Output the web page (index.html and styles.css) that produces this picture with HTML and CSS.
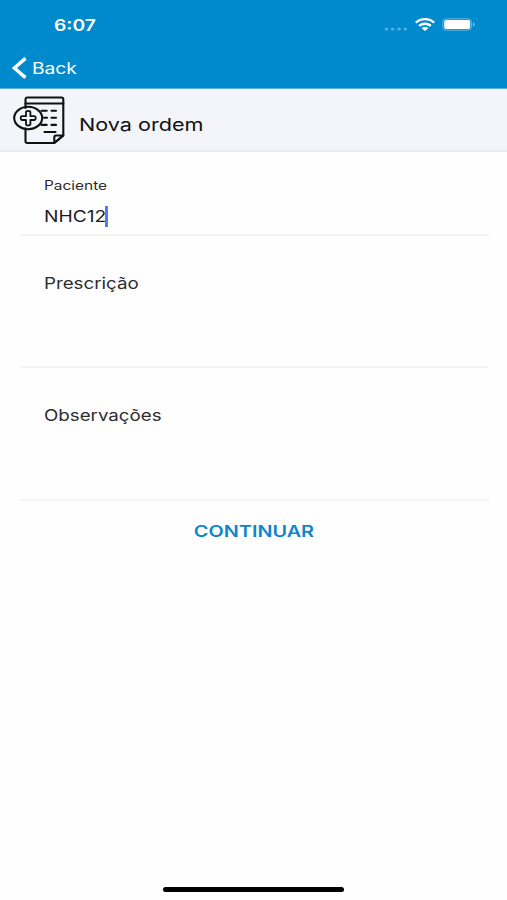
FILE: index.html
```
<!DOCTYPE html>
<html lang="pt">
<head>
  <meta charset="UTF-8">
  <meta name="viewport" content="width=device-width, initial-scale=1.0">
  <title>Nova ordem</title>
  <link rel="stylesheet" href="styles.css">
</head>
<body>
  <header class="header">
    <div class="status-bar">
      <span class="wide time">6:07</span>
      <div class="status-icons">
        <svg class="signal" width="24" height="4" viewBox="0 0 24 4" fill="#fff">
          <ellipse cx="2.4" cy="2" rx="1.9" ry="1.5"/>
          <ellipse cx="8.7" cy="2" rx="1.9" ry="1.5"/>
          <ellipse cx="15" cy="2" rx="1.9" ry="1.5"/>
          <ellipse cx="21.3" cy="2" rx="1.9" ry="1.5"/>
        </svg>
        <svg class="wifi" width="20" height="13" viewBox="0 0 20 13" fill="none" stroke="#fff" stroke-width="2.4">
          <path d="M.8 4.6C6 0 14 0 19.2 4.6"/>
          <path d="M4.1 7.9c3.4-2.9 8.4-2.9 11.8 0"/>
          <path d="M10 12.9L6.5 10.1c2-1.6 5-1.6 7 0z" fill="#fff" stroke="none"/>
        </svg>
        <svg class="battery" width="34" height="13" viewBox="0 0 34 13">
          <rect x=".8" y=".8" width="28.6" height="11.4" rx="3.4" fill="none" stroke="#fff" stroke-opacity=".4"/>
          <rect x="2.2" y="2.1" width="26" height="9" rx="2" fill="#fff"/>
          <path d="M31 4.5c2.2.7 2.2 3.3 0 4z" fill="#fff" fill-opacity=".45"/>
        </svg>
      </div>
    </div>
    <a class="back" href="#">
      <svg width="15" height="22" viewBox="0 0 15 22" fill="none" stroke="#fff" stroke-width="3.4">
        <path d="M13.5 1.4L2.4 11l11.1 9.6"/>
      </svg>
      <span class="wide back-text">Back</span>
    </a>
  </header>

  <div class="title-bar">
    <svg class="order-icon" width="53" height="49" viewBox="0 0 53 49" fill="none" stroke="#111" stroke-width="2.1" stroke-linecap="round" stroke-linejoin="round">
      <path d="M12.5 12V3.2c0-1 .8-1.7 1.8-1.7h34.2c1 0 1.8.7 1.8 1.7V39.5l-9 7.5h-27c-1 0-1.8-.7-1.8-1.7V32.5"/>
      <path d="M12.5 7.5h37.8"/>
      <path d="M41.3 47v-5.8c0-1 .7-1.7 1.7-1.7h7.3z"/>
      <path d="M28.5 14.7h5.2M38.5 14.7h4.5M31 21.8h3M38.5 21.8h4.5M28.5 28.9h5.2M38.5 28.9h4.5M31.5 36h11"/>
      <ellipse cx="15.2" cy="22" rx="14" ry="11.2"/>
      <path d="M13 16.2c0-1.9 4.4-1.9 4.4 0v4h3.8c2 0 2 3.8 0 3.8h-3.8v4c0 1.9-4.4 1.9-4.4 0v-4H9.2c-2 0-2-3.8 0-3.8H13z" stroke-width="1.8"/>
    </svg>
    <h1 class="wide title">Nova ordem</h1>
  </div>

  <main class="form">
    <div class="field patient">
      <label class="wide label">Paciente</label>
      <div class="value"><span class="wide text">NHC12</span><i class="caret"></i></div>
    </div>
    <div class="field area">
      <span class="wide text area-label">Prescrição</span>
    </div>
    <div class="field area notes-field">
      <span class="wide text area-label">Observações</span>
    </div>
    <button class="continue"><span class="wide continue-text">CONTINUAR</span></button>
  </main>

  <div class="home-indicator"></div>
</body>
</html>
```
FILE: styles.css
```
* {
  box-sizing: border-box;
}
body {
  margin: 0;
  height: 900px;
  display: flex;
  flex-direction: column;
  overflow: hidden;
  background: #fefefe;
  color: #1c1c1e;
  font-family: Inter, "Liberation Sans", sans-serif;
}
/* extended letterforms */
.wide {
  display: block;
  width: max-content;
  white-space: nowrap;
  transform: scaleX(1.2);
  transform-origin: left center;
}
.header {
  height: 89px;
  background: #008ace;
  border-bottom: 1px solid #5fb2de;
  color: #fff;
}
.status-bar {
  height: 48px;
  padding: 0 31px 0 54px;
  display: flex;
  align-items: center;
  justify-content: space-between;
}
.time {
  padding-top: 1px;
  font-size: 16px;
  font-weight: 600;
}
.status-icons {
  display: flex;
  align-items: center;
}
.signal {
  margin: 9px 7px 0 0;
  opacity: .32;
}
.wifi {
  margin-right: 7px;
}
.back {
  height: 39px;
  padding-left: 12px;
  display: flex;
  align-items: center;
  gap: 5px;
  color: #fff;
  text-decoration: none;
}
.back-text {
  font-size: 16px;
}
.title-bar {
  height: 63px;
  padding-left: 13px;
  display: flex;
  align-items: center;
  gap: 13px;
  background: #f4f5fa;
  border-bottom: 2px solid #ebecef;
}
.order-icon {
  margin-top: 2px;
}
.title {
  margin: 9px 0 0;
  font-size: 17.8px;
  font-weight: 400;
  color: #111;
  transform: scaleX(1.215);
}
.form {
  padding: 0 18px 0 20px;
  flex: 1;
}
.field {
  padding-left: 24px;
  border-bottom: 2px solid #f4f4f5;
}
.patient {
  height: 84px;
  padding-top: 25px;
}
.label {
  font-size: 12.8px;
  line-height: 18px;
  color: #2c2c2e;
  transform: scaleX(1.205);
}
.value {
  height: 22px;
  margin-top: 10px;
  display: flex;
  align-items: center;
}
.text {
  font-size: 16px;
  line-height: 22px;
}
.caret {
  width: 3px;
  height: 21px;
  margin-left: 9px;
  background: #5b7be8;
}
.area {
  height: 132px;
  padding-top: 36px;
}
.area-label {
  color: #2c2c2e;
  transform: scaleX(1.17);
}
.notes-field {
  height: 133px;
}
.continue {
  display: block;
  width: 100%;
  height: 60px;
  padding: 0 2px 0 0;
  border: 0;
  background: none;
  color: #0e86c8;
  font: inherit;
}
.continue-text {
  margin: 0 auto;
  font-size: 15.5px;
  font-weight: 600;
  transform: scaleX(1.28);
  transform-origin: center;
}
.home-indicator {
  width: 181px;
  height: 5px;
  margin: 0 auto 8px;
  border-radius: 3px;
  background: #000;
}
```
